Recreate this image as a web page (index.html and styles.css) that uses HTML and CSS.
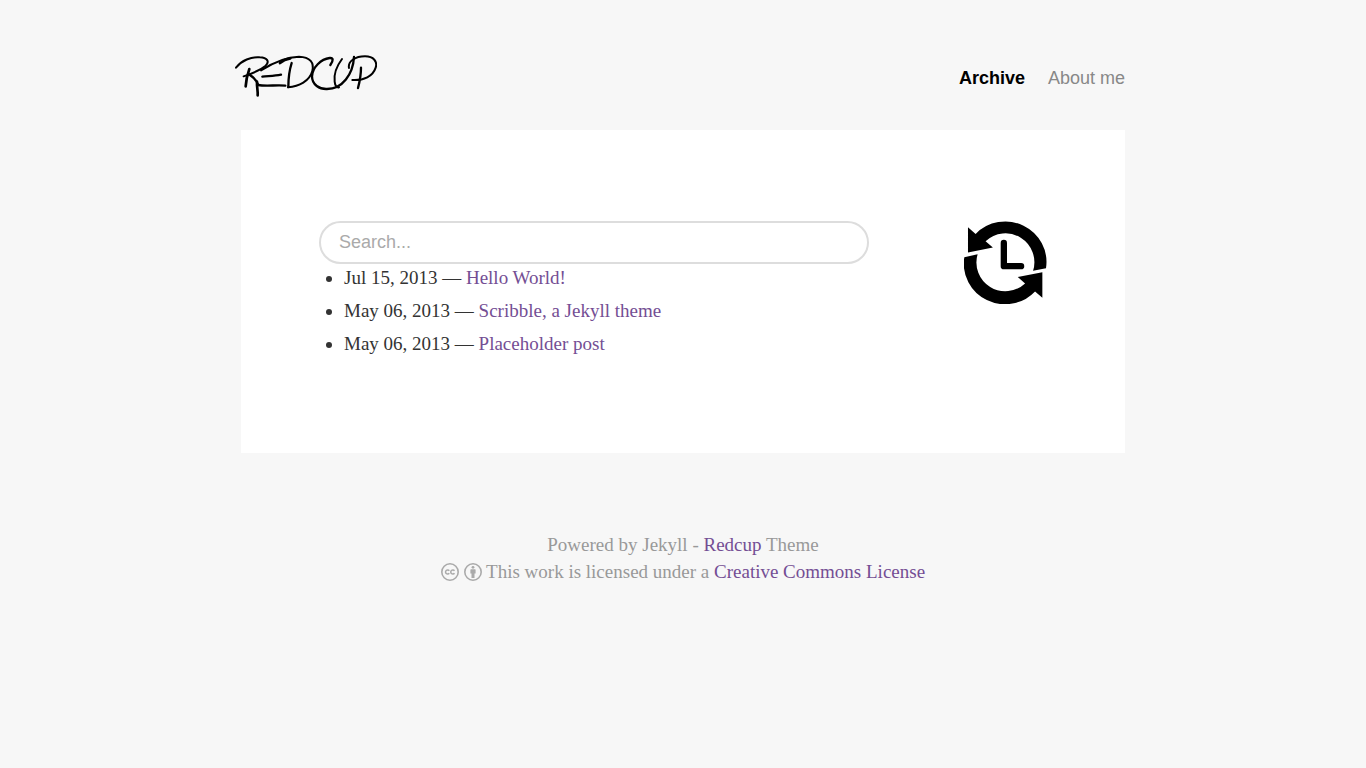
FILE: index.html
```html
<!DOCTYPE html>
<html lang="en">
<head>
    <meta charset="UTF-8">
    <meta name="viewport" content="width=device-width, initial-scale=1.0">
    <title>Archive - Redcup</title>
    <link rel="stylesheet" href="styles.css">
</head>
<body>
    <div class="container">
        <header class="site-header">
            <a class="logo" href="/" aria-label="Redcup">
                <svg viewBox="30 30 426 126" fill="none" stroke="#000" stroke-width="6" stroke-linecap="round" stroke-linejoin="round">
                    <path d="M33 68C50 46 78 35 104 37C128 38 134 50 122 62C108 74 80 86 56 94"/>
                    <path d="M73 72C66 92 63 108 62 124" stroke-width="8"/>
                    <path d="M72 88C84 96 94 104 99 118" stroke-width="7"/>
                    <path d="M96 110C95 124 99 138 98 151" stroke-width="8"/>
                    <path d="M99 120C124 125 154 119 181 122" stroke-width="7"/>
                    <path d="M112 95C130 93 148 93 168 89" stroke-width="7"/>
                    <path d="M108 76C136 58 178 36 222 35C256 36 268 54 262 78C254 108 222 124 189 127"/>
                    <path d="M165 54C174 46 184 42 196 40" stroke-width="8"/>
                    <path d="M200 54C193 76 190 104 190 126" stroke-width="7"/>
                    <path d="M316 60C326 46 325 38 314 39C288 42 262 68 261 94C261 120 284 133 306 132C352 132 384 88 387 36" stroke-width="7"/>
                    <path d="M351 42C336 62 326 88 329 110C330 122 336 129 342 127"/>
                    <path d="M372 69C368 48 392 34 420 34C446 34 458 50 452 68C444 94 416 107 382 105"/>
                    <path d="M408 68C408 90 404 110 399 129" stroke-width="7"/>
                </svg>
            </a>
            <nav class="site-nav">
                <a class="active" href="/archive">Archive</a>
                <a href="/about">About me</a>
            </nav>
        </header>

        <main class="content">
            <div class="posts">
                <input class="search" type="text" placeholder="Search..." aria-label="Search">
                <ul class="post-list">
                    <li>Jul 15, 2013 — <a href="/hello-world">Hello World!</a></li>
                    <li>May 06, 2013 — <a href="/scribble">Scribble, a Jekyll theme</a></li>
                    <li>May 06, 2013 — <a href="/placeholder">Placeholder post</a></li>
                </ul>
            </div>
            <svg class="archive-icon" viewBox="42 32 250 250" aria-hidden="true">
                <path d="M54 51L77 71A124 122 0 0 1 289 174L250 182A87 87 0 0 0 107 93L129 112L54 127Z"/>
                <path d="M43 141L83 132A87 87 0 0 0 226 220L204 201L278 186V263L256 244A124 122 0 0 1 43 141Z"/>
                <path d="M162 98V168H214" fill="none" stroke="#000" stroke-width="19" stroke-linecap="round" stroke-linejoin="round"/>
            </svg>
        </main>

        <footer class="site-footer">
            <p>Powered by Jekyll - <a href="/redcup">Redcup</a> Theme</p>
            <p>
                <svg class="cc-icon" viewBox="0 0 18 18" fill="none" stroke="#aaa" stroke-width="1.6" aria-hidden="true">
                    <circle cx="9" cy="9" r="8.2"/>
                    <path d="M8.3 7.7A2.1 2.1 0 1 0 8.3 10.3M13.5 7.7A2.1 2.1 0 1 0 13.5 10.3" stroke-width="1.5"/>
                </svg>
                <svg class="cc-icon" viewBox="0 0 18 18" aria-hidden="true">
                    <circle cx="9" cy="9" r="8.2" fill="none" stroke="#aaa" stroke-width="1.6"/>
                    <circle cx="9" cy="4.3" r="1.4" fill="#aaa"/>
                    <path d="M7 6.2H11Q11.6 6.2 11.6 6.9V10.6H10.5V15H7.5V10.6H6.4V6.9Q6.4 6.2 7 6.2Z" fill="#aaa"/>
                </svg>
                This work is licensed under a <a href="/license">Creative Commons License</a>
            </p>
        </footer>
    </div>
</body>
</html>
```

FILE: styles.css
```css
body {
    margin: 0;
    background-color: #f7f7f7;
    color: #333;
    font-family: "Liberation Serif", serif;
    font-size: 19px;
    line-height: 27px;
}

a {
    color: #744e94;
    text-decoration: none;
}

.container {
    max-width: 884px;
    margin: 0 auto;
}

.site-header {
    display: flex;
    justify-content: space-between;
    align-items: center;
    padding: 55px 0 33px;
}

.logo {
    margin-left: -6px;
}

.logo svg {
    display: block;
    width: 142px;
    height: 42px;
}

.site-nav {
    display: flex;
    gap: 23px;
    padding-top: 4px;
    font-family: "Liberation Sans", Arial, sans-serif;
    font-size: 18px;
}

.site-nav a {
    color: #888;
}

.site-nav .active {
    color: #000;
    font-weight: bold;
}

.content {
    display: flex;
    justify-content: space-between;
    align-items: flex-start;
    padding: 91px 78px 90px;
    background-color: #fff;
}

.posts {
    flex: 0 1 550px;
}

.search {
    display: block;
    box-sizing: border-box;
    width: 100%;
    height: 43px;
    padding: 0 18px;
    border: 2px solid #ddd;
    border-radius: 22px;
    background-color: #fff;
    font-family: "Liberation Sans", Arial, sans-serif;
    font-size: 18px;
}

.search::placeholder {
    color: #aaa;
}

.post-list {
    margin: 0;
    padding-left: 25px;
}

.post-list li {
    margin-bottom: 6px;
}

.archive-icon {
    width: 83px;
    height: 83px;
}

.site-footer {
    padding: 78px 0;
    color: #999;
    text-align: center;
}

.site-footer p {
    margin: 0;
}

.cc-icon {
    width: 18px;
    height: 18px;
    vertical-align: -3px;
}
```
